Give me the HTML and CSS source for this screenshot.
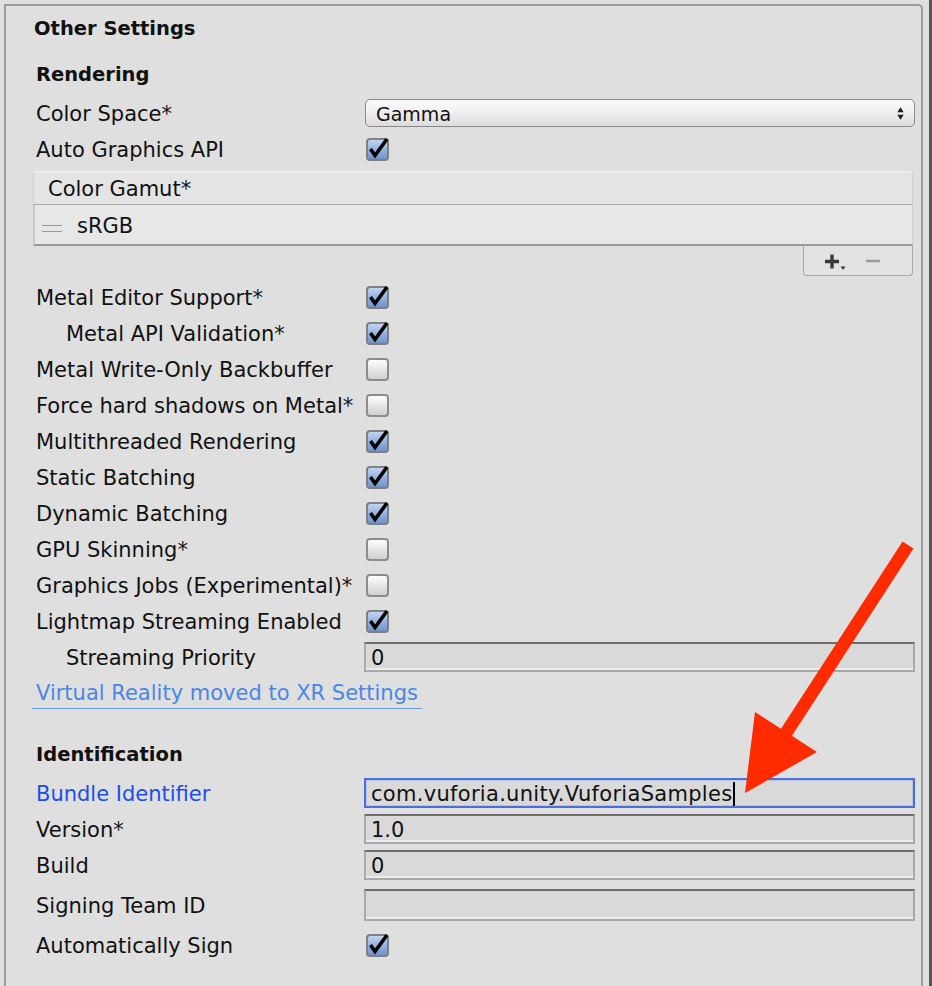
FILE: index.html
```html
<!DOCTYPE html>
<html>
<head>
<meta charset="utf-8">
<title>Other Settings</title>
<link rel="stylesheet" href="styles.css">
</head>
<body>
<div class="page">
  <div class="panel">
    <div class="title">Other Settings</div>
    <div class="section">Rendering</div>

    <div class="row gap4">
      <div class="label">Color Space*</div>
      <div class="control">
        <div class="dropdown">
          <span>Gamma</span>
          <svg class="updown" width="7" height="13" viewBox="0 0 7 13"><polygon points="0.3,5.3 3.5,0.3 6.7,5.3" fill="#1e1e1e"/><polygon points="0.3,7.7 6.7,7.7 3.5,12.7" fill="#1e1e1e"/></svg>
        </div>
      </div>
    </div>
    <div class="row">
      <div class="label">Auto Graphics API</div>
      <div class="control"><span class="cb on"><svg class="tick" width="24" height="22" viewBox="0 0 24 22"><path d="M3.5 10 L8 16.5 L20 0" fill="none" stroke="#000" stroke-width="3.6"/></svg></span></div>
    </div>

    <div class="list">
      <div class="list-head">Color Gamut*</div>
      <div class="list-body"><span class="handle"></span><span class="item">sRGB</span></div>
      <div class="list-foot">
        <span class="plus"><svg width="22" height="18" viewBox="0 0 22 18"><path d="M7 0.5 V14.5 M0 7.5 H14" stroke="#3a3a3a" stroke-width="3.4"/><polygon points="15.5,12.5 20.5,12.5 18,16" fill="#3a3a3a"/></svg></span>
        <span class="minus"><svg width="14" height="4" viewBox="0 0 14 4"><path d="M0 2 H14" stroke="#9a9a9a" stroke-width="2.4"/></svg></span>
      </div>
    </div>

    <div class="row gap3">
      <div class="label">Metal Editor Support*</div>
      <div class="control"><span class="cb on"><svg class="tick" width="24" height="22" viewBox="0 0 24 22"><path d="M3.5 10 L8 16.5 L20 0" fill="none" stroke="#000" stroke-width="3.6"/></svg></span></div>
    </div>
    <div class="row">
      <div class="label indent">Metal API Validation*</div>
      <div class="control"><span class="cb on"><svg class="tick" width="24" height="22" viewBox="0 0 24 22"><path d="M3.5 10 L8 16.5 L20 0" fill="none" stroke="#000" stroke-width="3.6"/></svg></span></div>
    </div>
    <div class="row">
      <div class="label">Metal Write-Only Backbuffer</div>
      <div class="control"><span class="cb"></span></div>
    </div>
    <div class="row">
      <div class="label">Force hard shadows on Metal*</div>
      <div class="control"><span class="cb"></span></div>
    </div>
    <div class="row">
      <div class="label">Multithreaded Rendering</div>
      <div class="control"><span class="cb on"><svg class="tick" width="24" height="22" viewBox="0 0 24 22"><path d="M3.5 10 L8 16.5 L20 0" fill="none" stroke="#000" stroke-width="3.6"/></svg></span></div>
    </div>
    <div class="row">
      <div class="label">Static Batching</div>
      <div class="control"><span class="cb on"><svg class="tick" width="24" height="22" viewBox="0 0 24 22"><path d="M3.5 10 L8 16.5 L20 0" fill="none" stroke="#000" stroke-width="3.6"/></svg></span></div>
    </div>
    <div class="row">
      <div class="label">Dynamic Batching</div>
      <div class="control"><span class="cb on"><svg class="tick" width="24" height="22" viewBox="0 0 24 22"><path d="M3.5 10 L8 16.5 L20 0" fill="none" stroke="#000" stroke-width="3.6"/></svg></span></div>
    </div>
    <div class="row">
      <div class="label">GPU Skinning*</div>
      <div class="control"><span class="cb"></span></div>
    </div>
    <div class="row">
      <div class="label">Graphics Jobs (Experimental)*</div>
      <div class="control"><span class="cb"></span></div>
    </div>
    <div class="row">
      <div class="label">Lightmap Streaming Enabled</div>
      <div class="control"><span class="cb on"><svg class="tick" width="24" height="22" viewBox="0 0 24 22"><path d="M3.5 10 L8 16.5 L20 0" fill="none" stroke="#000" stroke-width="3.6"/></svg></span></div>
    </div>
    <div class="row">
      <div class="label indent">Streaming Priority</div>
      <div class="control"><div class="field">0</div></div>
    </div>
    <div class="link-row"><a class="link">Virtual Reality moved to XR Settings</a></div>

    <div class="section ident">Identification</div>

    <div class="row gap4">
      <div class="label blue">Bundle Identifier</div>
      <div class="control"><div class="field focus"><span class="wide">com.vuforia.unity.VuforiaSamples</span><span class="caret"></span></div></div>
    </div>
    <div class="row">
      <div class="label">Version*</div>
      <div class="control"><div class="field">1.0</div></div>
    </div>
    <div class="row">
      <div class="label">Build</div>
      <div class="control"><div class="field">0</div></div>
    </div>
    <div class="row gap4">
      <div class="label">Signing Team ID</div>
      <div class="control"><div class="field tall"></div></div>
    </div>
    <div class="row gap4">
      <div class="label">Automatically Sign</div>
      <div class="control"><span class="cb on"><svg class="tick" width="24" height="22" viewBox="0 0 24 22"><path d="M3.5 10 L8 16.5 L20 0" fill="none" stroke="#000" stroke-width="3.6"/></svg></span></div>
    </div>
  </div>
  <div class="edge"></div>
</div>

<svg class="annot" width="932" height="986" viewBox="0 0 932 986">
  <line x1="908" y1="545" x2="786" y2="733" stroke="#fe2a00" stroke-width="13"/>
  <polygon points="755,712 817,752 745,793" fill="#fe2a00"/>
</svg>
</body>
</html>
```

FILE: styles.css
```css
html, body {
  margin: 0;
  padding: 0;
}
body {
  width: 932px;
  height: 986px;
  overflow: hidden;
  background: #dfdfdf;
  font-family: "DejaVu Sans", "Liberation Sans", sans-serif;
  font-size: 21px;
  color: #111;
  position: relative;
}
.page {
  display: flex;
  height: 986px;
}
.panel {
  box-sizing: border-box;
  width: 919px;
  min-height: 1010px;
  margin: 4px 0 0 4px;
  border: 2px solid #9c9c9c;
  border-bottom: none;
  border-top-right-radius: 5px;
  display: flex;
  flex-direction: column;
}
.edge {
  width: 3px;
  margin-left: 6px;
  background: #555;
  height: 986px;
}
.title {
  height: 36px;
  box-sizing: border-box;
  padding-top: 2px;
  line-height: 36px;
  margin-top: 3px;
  padding-left: 28px;
  font-weight: bold;
  font-size: 19.5px;
}
.section {
  height: 36px;
  box-sizing: border-box;
  padding-top: 2px;
  line-height: 36px;
  margin-top: 10px;
  padding-left: 30px;
  font-weight: bold;
  font-size: 19.5px;
}
.section.ident {
  margin-top: 24px;
}
.row {
  display: grid;
  grid-template-columns: 328px 1fr;
  height: 36px;
  align-items: center;
  padding: 0 6px 0 30px;
}
.row.gap4 { margin-top: 4px; }
.row.gap3 { margin-top: 3px; }
.label {
  white-space: nowrap;
  padding-top: 2px;
}
.label.indent { padding-left: 30px; }
.label.blue { color: #1c4fe6; }
.control {
  display: flex;
  align-items: center;
}
.dropdown {
  flex: 1;
  margin-left: 1px;
  height: 28px;
  box-sizing: border-box;
  border: 1.5px solid #8a8a8a;
  border-radius: 5px;
  background: linear-gradient(#fbfbfb, #f0f0f0 45%, #dcdcdc);
  display: flex;
  align-items: center;
  justify-content: space-between;
  padding: 1px 10px 0 10px;
  font-size: 19px;
}
.updown { display: block; margin-top: 0; }
.cb {
  position: relative;
  display: block;
  width: 23px;
  height: 23px;
  margin-left: 2px;
  margin-top: 1px;
  box-sizing: border-box;
  border: 2px solid #8c8c8c;
  border-radius: 4px;
  background: linear-gradient(#fdfdfd, #e6e6e6 50%, #cfcfcf);
}
.cb.on {
  border-color: #7f7f7f;
  background: linear-gradient(#c3d5ef, #94b2e0 50%, #6f93cb);
}
.tick {
  position: absolute;
  left: -1px;
  top: -1px;
  overflow: visible;
}
.list {
  margin: 4px 8px 0 27px;
  display: flex;
  flex-direction: column;
}
.list-head {
  height: 34px;
  box-sizing: border-box;
  border: 1px solid #d0d0d0;
  border-top: 2px solid #ececec;
  border-bottom: 1px solid #a9a9a9;
  border-radius: 4px 4px 0 0;
  background: #e4e4e4;
  padding-left: 14px;
  display: flex;
  align-items: center;
}
.list-body {
  height: 41px;
  box-sizing: border-box;
  border-left: 2px solid #c8c8c8;
  border-right: 1px solid #d0d0d0;
  border-bottom: 2px solid #999;
  background: #e6e7e7;
  display: flex;
  align-items: center;
}
.item { padding-top: 2px; }
.handle {
  width: 20px;
  height: 5px;
  margin: 8px 15px 0 7px;
  border-top: 1.5px solid #9b9b9b;
  border-bottom: 1.5px solid #9b9b9b;
}
.list-foot {
  align-self: flex-end;
  width: 110px;
  height: 30px;
  box-sizing: border-box;
  border: 1.5px solid #a8a8a8;
  border-top: none;
  border-radius: 0 0 4px 4px;
  background: #e2e2e2;
  display: flex;
  align-items: center;
  padding-left: 21px;
}
.plus svg { display: block; margin-top: 4px; }
.minus svg { display: block; margin-left: 19px; margin-top: 0; }
.field {
  flex: 1;
  height: 30px;
  box-sizing: border-box;
  border: 2px solid #a8a8a8;
  border-top-color: #6c6c6c;
  background: #d9d9d9;
  box-shadow: inset 0 -2px 0 #ededed;
  padding: 1px 0 0 5px;
  display: flex;
  align-items: center;
  white-space: nowrap;
}
.field.tall { height: 32px; }
.field.focus {
  border-color: #4a6edb;
  box-shadow: inset 0 0 0 1px #bcc6e2;
}
.wide { letter-spacing: 0.3px; }
.caret {
  display: inline-block;
  width: 2px;
  height: 24px;
  margin-left: 1px;
  background: #000;
}
.link-row {
  height: 36px;
  padding-left: 26px;
  display: flex;
  align-items: flex-start;
}
.link {
  display: block;
  padding: 4px 4px 0 4px;
  line-height: 29px;
  color: #4a87e4;
  border-bottom: 1px solid #6f9be6;
  white-space: nowrap;
}
.annot {
  position: absolute;
  left: 0;
  top: 0;
  pointer-events: none;
}
```
